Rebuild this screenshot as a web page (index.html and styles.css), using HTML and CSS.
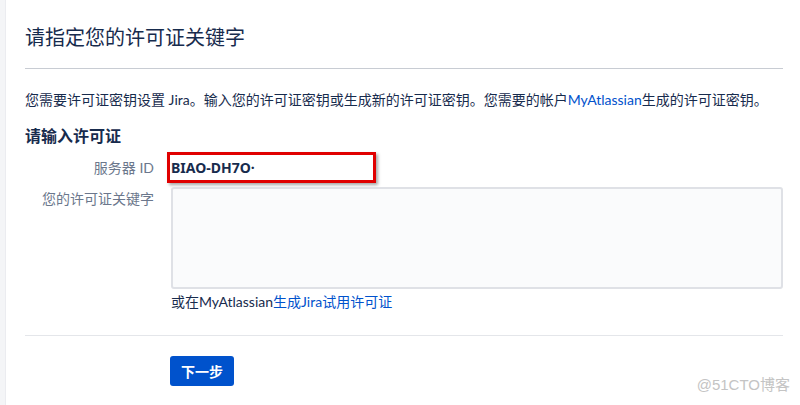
FILE: index.html
```html
<!DOCTYPE html>
<html lang="zh-CN">
<head>
    <meta charset="UTF-8">
    <title>请指定您的许可证关键字</title>
    <link rel="stylesheet" href="styles.css">
</head>
<body>
    <div class="sidebar"></div>
    <div class="main">
        <h1>请指定您的许可证关键字</h1>
        <hr class="rule">

        <p class="intro">您需要许可证密钥设置 Jira。输入您的许可证密钥或生成新的许可证密钥。您需要的帐户<a href="#">MyAtlassian</a>生成的许可证密钥。</p>

        <h3>请输入许可证</h3>

        <div class="form">
            <div class="label">服务器 ID</div>
            <div class="value">
                <span class="server-id">BIAO-DH7O·</span>
                <span class="highlight"></span>
            </div>

            <div class="label label-top">您的许可证关键字</div>
            <div class="value">
                <textarea class="license"></textarea>
                <div class="hint">或在MyAtlassian<a href="#">生成Jira试用许可证</a></div>
            </div>
        </div>

        <hr class="rule rule-light">

        <button class="next">下一步</button>
    </div>

    <div class="watermark">@51CTO博客</div>
</body>
</html>
```

FILE: styles.css
```css
* {
    margin: 0;
    padding: 0;
    box-sizing: border-box;
}

body {
    font-family: Lato, "Noto Sans CJK SC", sans-serif;
    font-size: 14px;
    color: #172b4d;
    background: white;
    display: flex;
    min-height: 405px;
}

a {
    color: #0052cc;
    text-decoration: none;
}

.sidebar {
    width: 6px;
    background: #f4f5f7;
    border-right: 1px solid #ebecf0;
}

.main {
    flex: 1;
    padding: 0 17px 0 19px;
}

h1 {
    font-size: 20px;
    font-weight: normal;
    line-height: 28px;
    margin-top: 23px;
}

.rule {
    border: none;
    border-top: 1px solid #c8ccd3;
    margin-top: 17px;
}

.rule-light {
    border-top-color: #e4e6ea;
    margin-top: 23px;
}

.intro {
    line-height: 20px;
    margin-top: 21px;
    white-space: nowrap;
}

h3 {
    font-size: 16px;
    font-weight: 600;
    line-height: 24px;
    margin-top: 14px;
}

.form {
    display: grid;
    grid-template-columns: 129px 1fr;
    column-gap: 17px;
    margin-top: 4px;
}

.label {
    color: #6b778c;
    text-align: right;
    line-height: 31px;
}

.label-top {
    line-height: 20px;
    padding-top: 6px;
}

.value {
    position: relative;
}

.server-id {
    display: block;
    font-family: "Noto Sans", sans-serif;
    font-weight: bold;
    line-height: 31px;
    color: #172b4d;
}

.highlight {
    position: absolute;
    left: -4px;
    top: 0;
    width: 209px;
    height: 31px;
    border: 3px solid #e00000;
    box-shadow: 2px 2px 3px rgba(0,0,0,0.35);
}

.license {
    display: block;
    width: 100%;
    height: 102px;
    margin-top: 4px;
    background: #fafbfc;
    border: 2px solid #dfe1e6;
    border-radius: 3px;
    resize: none;
}

.hint {
    line-height: 20px;
    margin-top: 3px;
}

.next {
    display: block;
    margin: 20px 0 0 145px;
    width: 64px;
    height: 30px;
    background: #0052cc;
    color: white;
    border: none;
    border-radius: 3px;
    font-family: inherit;
    font-size: 14px;
    font-weight: bold;
}

.watermark {
    position: absolute;
    right: 10px;
    top: 373px;
    font-size: 15px;
    color: #c4c4c4;
    font-family: "Liberation Sans", "Noto Sans CJK SC", sans-serif;
}
```
